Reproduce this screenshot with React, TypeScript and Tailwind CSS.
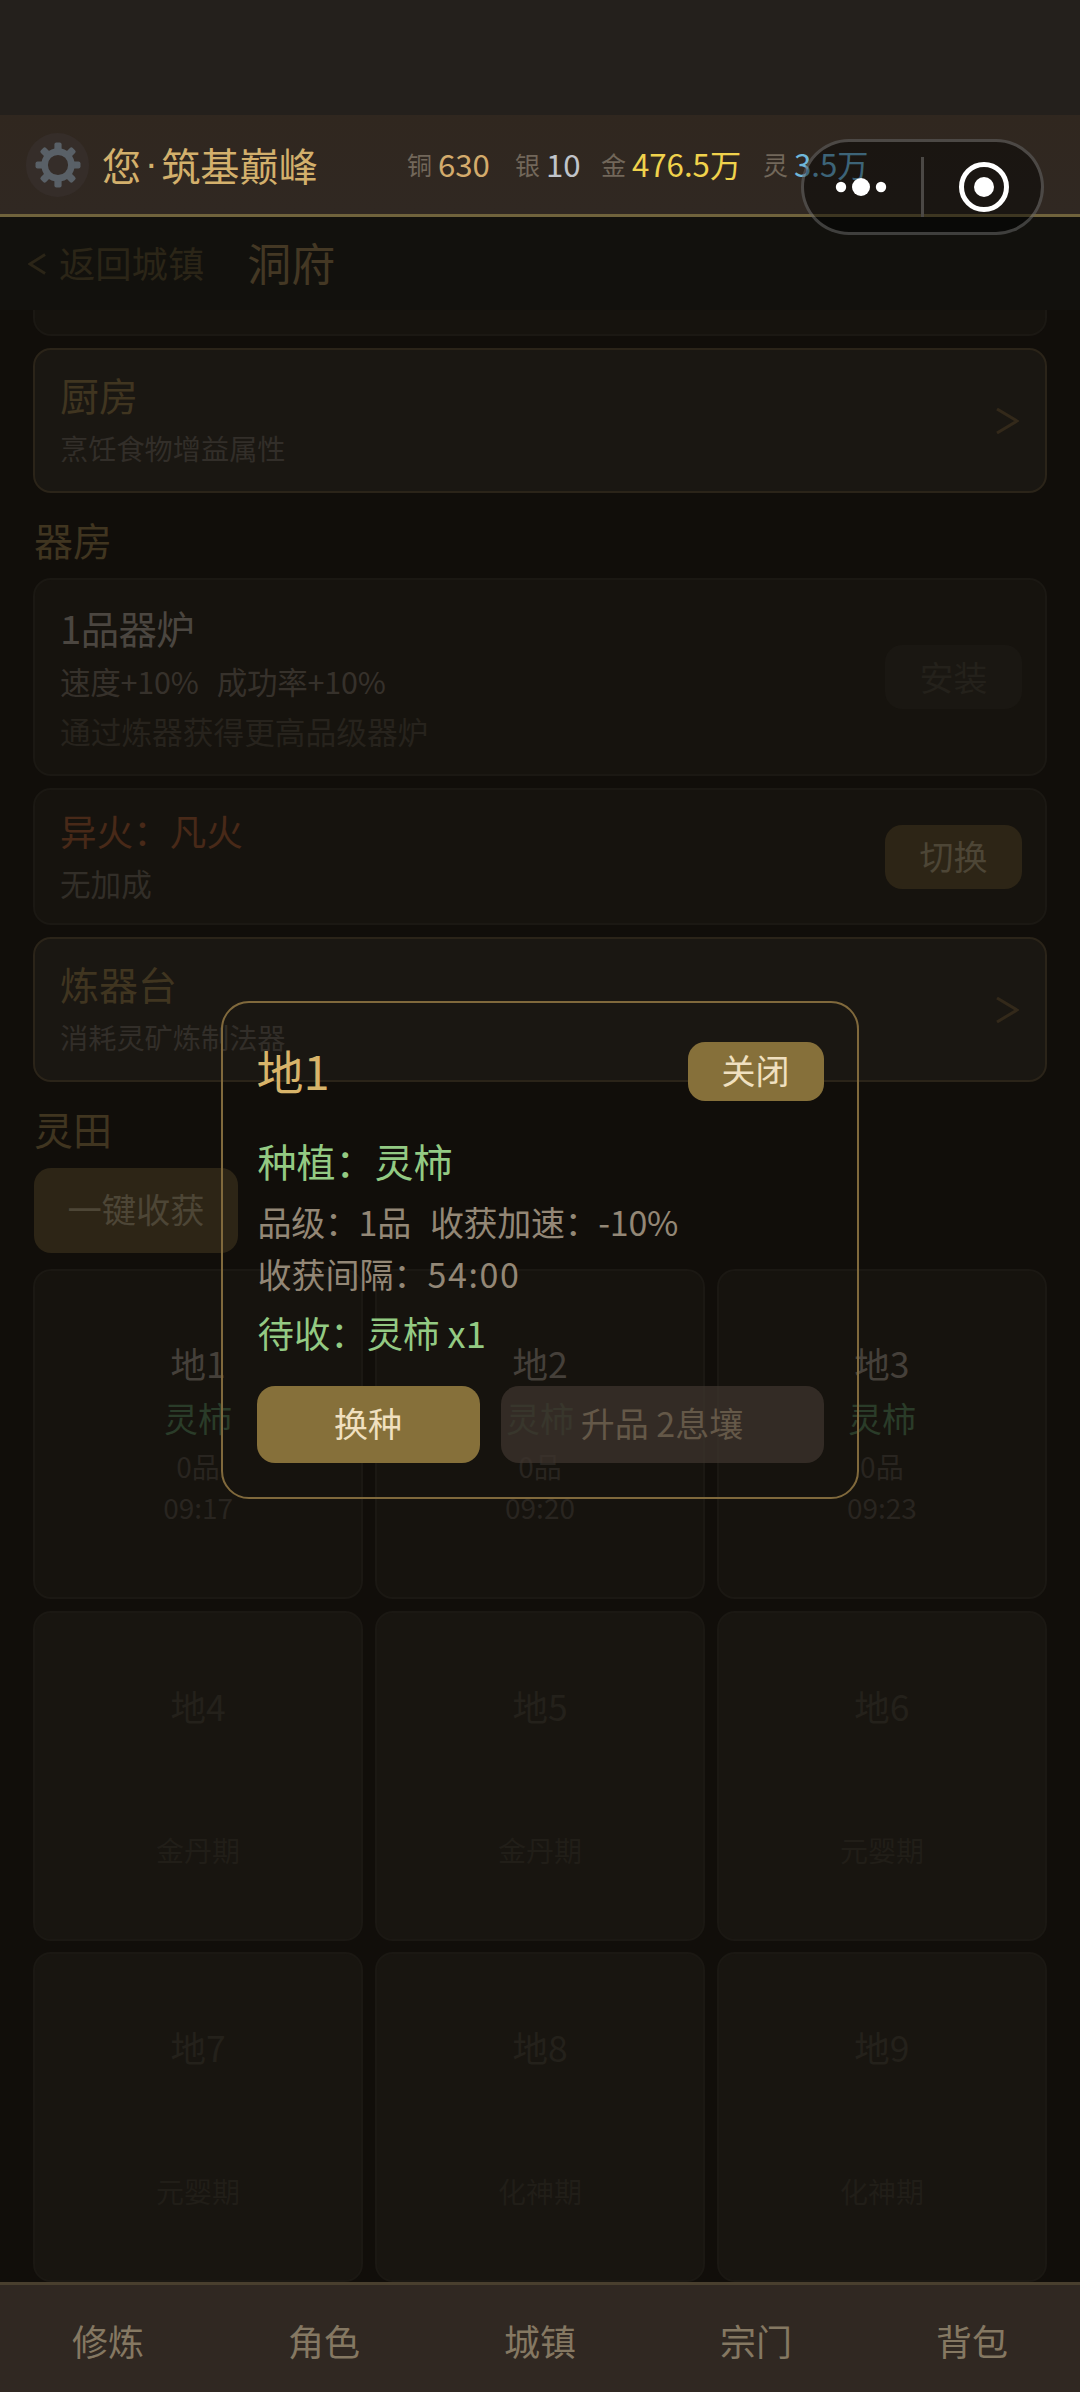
import type { ReactNode } from 'react'

const resources = [
    { label: '铜', value: '630', color: 'text-[#d3ab6c]', box: 'w-[108px]' },
    { label: '银', value: '10', color: 'text-[#c0c4ca]', box: 'w-[86px]' },
    { label: '金', value: '476.5万', color: 'text-[#f0d24c]', box: 'w-[162px]' },
    { label: '灵', value: '3.5万', color: 'text-[#6fb7da]', box: 'w-[110px]' },
]

const plots = [
    { name: '地1', crop: '灵柿', time: '09:17' },
    { name: '地2', crop: '灵柿', time: '09:20' },
    { name: '地3', crop: '灵柿', time: '09:23' },
    { name: '地4', lock: '金丹期' },
    { name: '地5', lock: '金丹期' },
    { name: '地6', lock: '元婴期' },
    { name: '地7', lock: '元婴期' },
    { name: '地8', lock: '化神期' },
    { name: '地9', lock: '化神期' },
]

const tabs = ['修炼', '角色', '城镇', '宗门', '背包']

const Gear = () => (
    <svg viewBox="-23 -23 46 46" className="h-[46px] w-[46px]">
        <g fill="#596067">
            {[0, 45, 90, 135, 180, 225, 270, 315].map((a) => (
                <rect key={a} x="-3.6" y="-22.5" width="7.2" height="10" rx="2" transform={`rotate(${a})`} />
            ))}
        </g>
        <circle r="13.4" fill="none" stroke="#596067" strokeWidth="6.6" />
    </svg>
)

const Header = () => (
    <header className="flex h-[102px] shrink-0 items-center border-b-[3px] border-[#70633c] bg-linear-to-b from-[#30271f] to-[#302822] pl-[26px]">
        <div className="flex h-[64px] w-[63px] items-center justify-center rounded-full bg-[#352d29]">
            <Gear />
        </div>
        <div className="ml-[13px] flex w-[305px] items-center pb-[1px] text-[39.2px] leading-[60px] text-[#d3b06c]">
            您<span className="w-[20px] text-center font-['Liberation_Sans',sans-serif]">·</span>筑基巅峰
        </div>
        {resources.map((r) => (
            <div key={r.label} className={`flex shrink-0 items-center pb-[1px] ${r.box}`}>
                <span className="w-[31px] text-[25px] leading-[40px] text-[#72675a]">{r.label}</span>
                <span className={`text-[31.2px] leading-[40px] whitespace-nowrap ${r.color}`}>{r.value}</span>
            </div>
        ))}
    </header>
)

// host app's floating menu
const Capsule = () => (
    <div className="absolute top-[139px] left-[801px] z-20 flex h-[96px] w-[243px] rounded-full border-[3px] border-[#ffffff38] bg-black/45">
        <svg viewBox="0 0 237 90" className="h-full w-full">
            <g fill="#fff">
                <circle cx="37" cy="45" r="5.2" />
                <circle cx="57" cy="45" r="9" />
                <circle cx="77" cy="45" r="5.2" />
                <circle cx="180" cy="45" r="10" />
            </g>
            <circle cx="180" cy="45" r="22.5" fill="none" stroke="#fff" strokeWidth="5" />
            <rect x="117" y="15" width="3" height="60" fill="#4b4845" />
        </svg>
    </div>
)

const LinkCard = ({ title, desc }: { title: string; desc: string }) => (
    <div className="flex h-[145px] shrink-0 items-center justify-between rounded-[18px] border-2 border-[#2b2419] bg-[#1a1712] pr-[26px] pl-[25px]">
        <div>
            <div className="text-[39px] leading-[52px] text-[#403520]">{title}</div>
            <div className="pt-[2px] text-[28.2px] leading-[52px] text-[#322e29]">{desc}</div>
        </div>
        <svg viewBox="0 0 24 26" className="h-[26px] w-[24px]" fill="none" stroke="#33291a" strokeWidth="3">
            <path d="M2 1l20 12L2 25" />
        </svg>
    </div>
)

const Card = ({ height, children }: { height: string; children: ReactNode }) => (
    <div className={`flex shrink-0 items-center justify-between rounded-[18px] border-2 border-[#1b1813] bg-[#16130e] pr-[23px] pl-[25px] ${height}`}>
        {children}
    </div>
)

const Plot = ({ name, crop, time, lock }: { name: string; crop?: string; time?: string; lock?: string }) => (
    <div className={`flex h-[330px] flex-col items-center rounded-[18px] border-2 border-[#1b1813] ${lock ? 'bg-[#181510]' : 'bg-[#16130e]'}`}>
        {lock ? (
            <>
                <div className="mt-[65px] text-[35.5px] leading-[56px] text-[#24211b]">{name}</div>
                <div className="mt-[95px] text-[28px] leading-[42px] text-[#211e18]">{lock}</div>
            </>
        ) : (
            <>
                <div className="mt-[65px] text-[35.5px] leading-[54px] text-[#45403a]">{name}</div>
                <div className="text-[34px] leading-[56px] text-[#2a3c29]">{crop}</div>
                <div className="text-[28px] leading-[40px] text-[#292520]">0品</div>
                <div className="text-[28px] leading-[42px] text-[#292520]">{time}</div>
            </>
        )}
    </div>
)

const PlotDialog = () => (
    <div className="absolute inset-0 z-10 flex items-center justify-center">
        <div className="h-[498px] w-[638px] rounded-[28px] border-2 border-[#80693c] px-[33.5px] pt-[39px]">
            <div className="flex items-center justify-between">
                <div className="pb-[5px] text-[47px] leading-[55px] text-[#d8b46a]">地1</div>
                <button className="h-[59px] w-[136px] rounded-[17px] bg-[#86703a] pb-[3px] text-[34px] leading-[56px] text-[#f0e0c0]">关闭</button>
            </div>
            <div className="mt-[30px] pl-[1px] text-[39px] leading-[56px] text-[#93ca83]">种植：灵柿</div>
            <div className="mt-[8px] pl-[1px] text-[34px] leading-[52px] text-[#938776]">
                <div className="tracking-[-0.3px] whitespace-pre">品级：1品<span className="inline-block w-[19px]" />收获加速：-10%</div>
                <div>收获间隔：<span className="tracking-[1.6px]">54:00</span></div>
            </div>
            <div className="mt-[5px] pl-[1px] text-[36.4px] leading-[54px] text-[#93ca83]">待收：灵柿 x1</div>
            <div className="mt-[27px] flex gap-[21px]">
                <button className="h-[77px] w-[223px] rounded-[18px] bg-[#86703a] pb-[3px] text-[34px] text-[#f0e0c0]">换种</button>
                <button className="h-[77px] flex-1 rounded-[18px] bg-[#3d342e]/75 pb-[3px] text-[34px] text-[#645848]">升品 2息壤</button>
            </div>
        </div>
    </div>
)

export default function App() {
    return (
        <div className="relative flex h-[2392px] w-[1080px] flex-col overflow-hidden bg-[#110e0a] font-['Noto_Sans_CJK_SC',sans-serif]">
            <div className="h-[115px] shrink-0 bg-[#24201c]" />
            <Header />
            <Capsule />

            <div className="relative flex min-h-0 flex-1 flex-col">
                <div className="flex h-[93px] shrink-0 items-center bg-[#12110d] pl-[28px]">
                    <svg viewBox="0 0 20 22" className="h-[22px] w-[19px]" fill="none" stroke="#2b2517" strokeWidth="3">
                        <path d="M18 1L2 11l16 10" />
                    </svg>
                    <span className="ml-[12px] pb-[2px] text-[36.3px] text-[#2b2517]">返回城镇</span>
                    <span className="ml-[43px] pb-[4px] text-[44px] text-[#443824]">洞府</span>
                </div>

                <main className="flex min-h-0 flex-1 flex-col overflow-hidden px-[33px]">
                    <div className="h-[26px] shrink-0 rounded-b-[18px] border-2 border-t-0 border-[#1b1813] bg-[#16130e]" />
                    <div className="h-[12px] shrink-0" />
                    <LinkCard title="厨房" desc="烹饪食物增益属性" />

                    <h2 className="mt-[18px] pl-[1px] text-[39px] leading-[56px] text-[#403520]">器房</h2>
                    <div className="mt-[11px] flex flex-col gap-[12px]">
                        <Card height="h-[198px]">
                            <div>
                                <div className="text-[38.4px] leading-[54px] tracking-[-0.6px] text-[#4b4640]">1品器炉</div>
                                <div className="pt-[1px] text-[30.5px] leading-[52px] tracking-[-0.2px] text-[#36312b]">
                                    速度+10%<span className="inline-block w-[18px]" />成功率+10%
                                </div>
                                <div className="text-[30.7px] leading-[48px] text-[#27231d]">通过炼器获得更高品级器炉</div>
                            </div>
                            <button className="h-[64px] w-[137px] rounded-[17px] bg-[#1a1712] pb-[2px] text-[34px] text-[#24211b]">安装</button>
                        </Card>
                        <Card height="h-[137px]">
                            <div className="pb-[2px]">
                                <div className="text-[36.6px] leading-[54px] text-[#482918]">异火：凡火</div>
                                <div className="text-[30.6px] leading-[50px] text-[#322e28]">无加成</div>
                            </div>
                            <button className="h-[64px] w-[137px] rounded-[17px] bg-[#2d2516] pb-[3px] text-[34px] text-[#4d4636]">切换</button>
                        </Card>
                        <LinkCard title="炼器台" desc="消耗灵矿炼制法器" />
                    </div>

                    <h2 className="mt-[18px] pl-[1px] text-[39px] leading-[56px] text-[#403520]">灵田</h2>
                    <button className="mt-[12px] ml-[1px] h-[85px] w-[204px] shrink-0 rounded-[17px] bg-[#2d2516] pb-[3px] text-[34.3px] text-[#4d4636]">一键收获</button>
                    <div className="mt-[16px] grid shrink-0 grid-cols-3 gap-[11.7px]">
                        {plots.map((p) => (
                            <Plot key={p.name} {...p} />
                        ))}
                    </div>
                </main>

                <PlotDialog />
            </div>

            <nav className="flex h-[110px] shrink-0 border-t-[3px] border-[#493f2e] bg-[#302822]">
                {tabs.map((t) => (
                    <button key={t} className="flex-1 pt-[2px] text-[36px] text-[#857862]">
                        {t}
                    </button>
                ))}
            </nav>
        </div>
    )
}
